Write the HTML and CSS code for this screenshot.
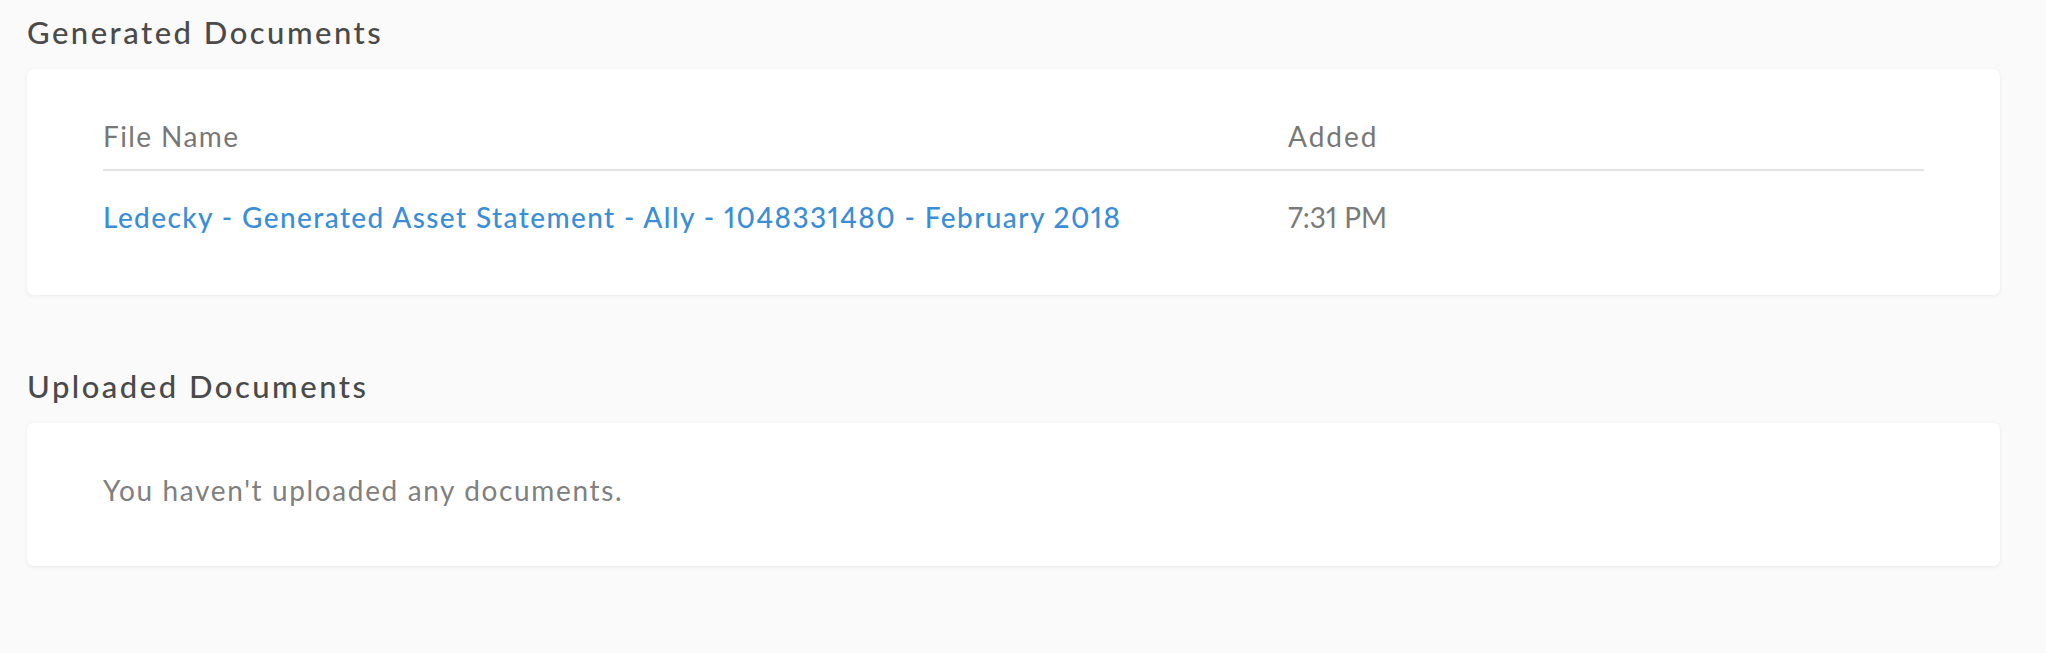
FILE: index.html
```
<!DOCTYPE html>
<html>
<head>
<meta charset="utf-8">
<link rel="stylesheet" href="styles.css">
</head>
<body>
<div class="page">
  <h2 class="section-title">Generated Documents</h2>
  <div class="card card-table">
    <div class="table">
      <div class="row head">
        <div class="cell">File Name</div>
        <div class="cell added">Added</div>
      </div>
      <div class="row body">
        <div class="cell"><a class="doc-link" href="#">Ledecky - Generated Asset Statement - Ally - 1048331480 - February 2018</a></div>
        <div class="cell time">7:31 PM</div>
      </div>
    </div>
  </div>
  <h2 class="section-title second">Uploaded Documents</h2>
  <div class="card card-empty">
    <p class="empty">You haven't uploaded any documents.</p>
  </div>
</div>
</body>
</html>
```
FILE: styles.css
```
html, body {
  margin: 0;
  padding: 0;
  background: #ffffff;
}
body {
  font-family: Lato, "Open Sans", sans-serif;
}
.page {
  width: 2046px;
  height: 653px;
  box-sizing: border-box;
  background: #fafafa;
  padding: 14px 46px 0 27px;
}
.section-title {
  margin: 0 0 19px 0;
  font-size: 31px;
  line-height: 36px;
  font-weight: 500;
  letter-spacing: 2.5px;
  color: #4a4a4a;
}
.section-title.second {
  margin-top: 73px;
}
.card {
  background: #ffffff;
  border-radius: 7px;
  box-shadow: 0 1px 4px rgba(0, 0, 0, 0.07);
  padding: 0 76px;
}
.card-table {
  padding-top: 46px;
  padding-bottom: 34px;
}
.row {
  display: grid;
  grid-template-columns: 1185px 1fr;
  font-size: 28px;
  line-height: 42px;
  letter-spacing: 1.4px;
}
.row.head {
  color: #777777;
  padding-bottom: 12px;
  border-bottom: 2px solid #e3e3e3;
}
.added {
  letter-spacing: 2px;
}
.row.body {
  padding-top: 25px;
  padding-bottom: 23px;
}
.doc-link {
  color: #3a8ed8;
  text-decoration: none;
  font-weight: 500;
  font-variant-numeric: proportional-nums;
}
.time {
  color: #7a7a7a;
  letter-spacing: 0;
  font-variant-numeric: proportional-nums;
}
.card-empty {
  padding-top: 46px;
  padding-bottom: 55px;
}
.empty {
  margin: 0;
  font-size: 28px;
  line-height: 42px;
  letter-spacing: 1.63px;
  color: #808080;
}
```
